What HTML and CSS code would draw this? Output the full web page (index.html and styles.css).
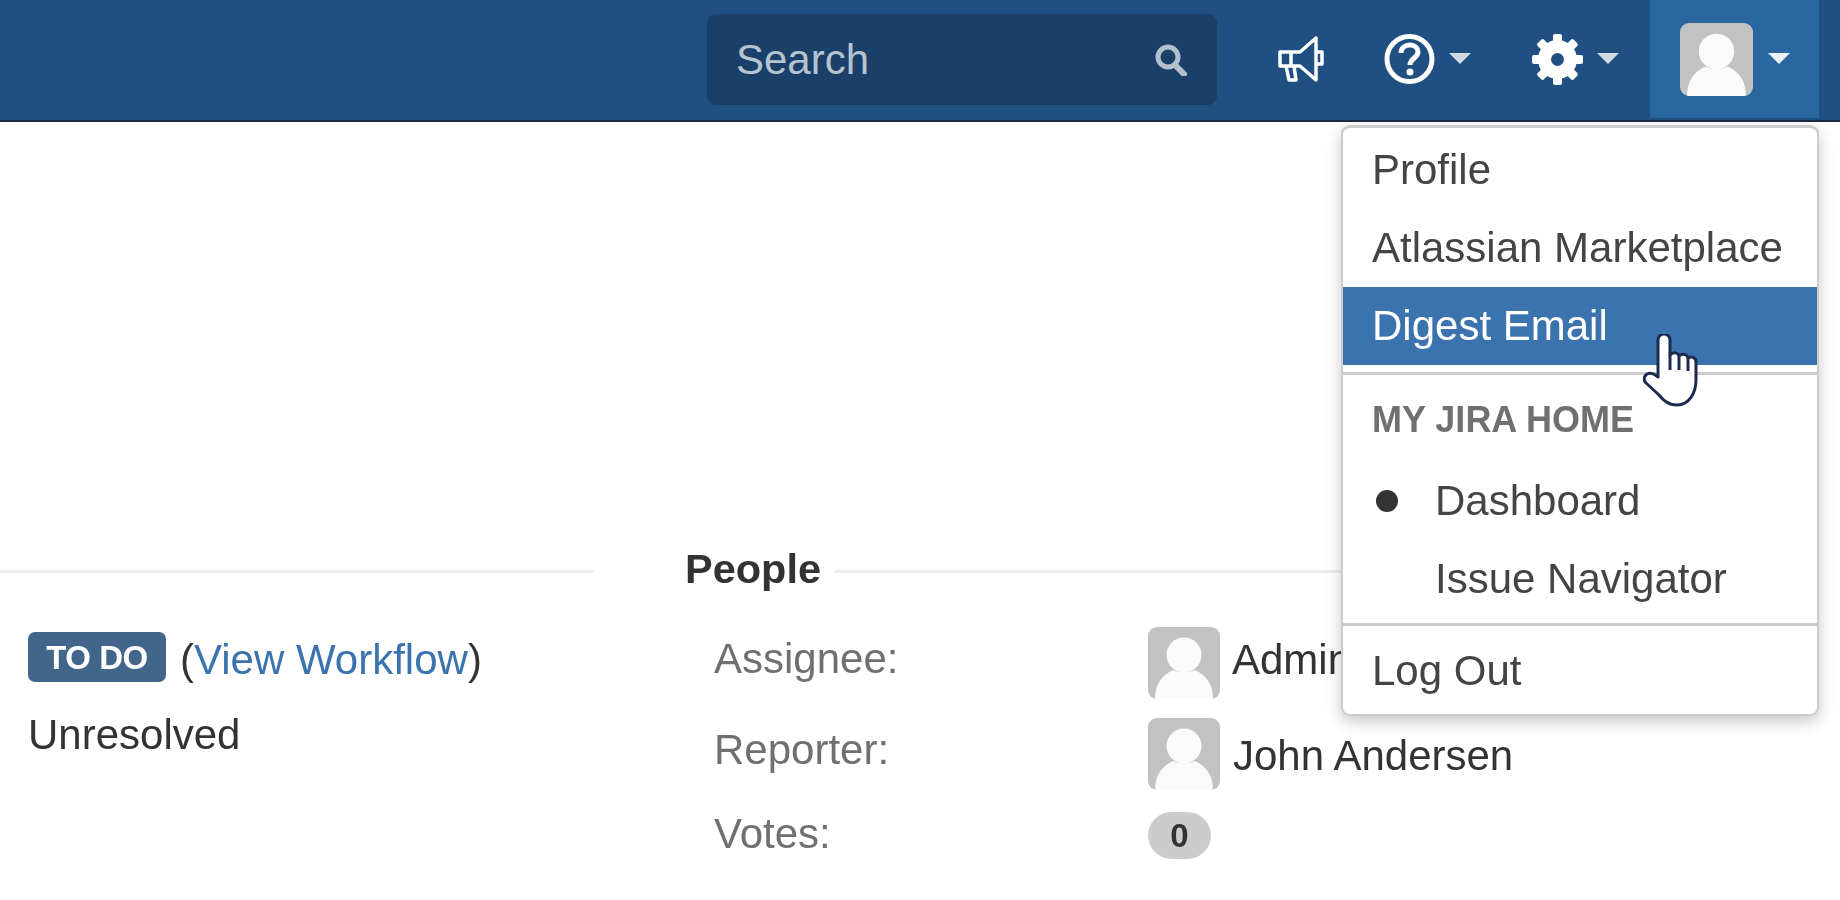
FILE: index.html
```html
<!DOCTYPE html>
<html lang="en">

<head>
    <meta charset="UTF-8" />
    <title>Issue - Profile menu</title>
    <link rel="stylesheet" href="styles.css">
</head>

<body>

    <svg class="defs" width="0" height="0">
        <symbol id="avatar" viewBox="0 0 72 72">
            <rect width="72" height="72" fill="#c2c2c2" />
            <circle cx="36" cy="28" r="17.5" fill="#fafafa" />
            <path d="M7 72c0-13 5-23 18-29 7 3 15 3 22 0 13 6 18 16 18 29z" fill="#fafafa" />
        </symbol>
    </svg>

    <header class="topbar">
        <div class="search">
            <span class="search-text">Search</span>
            <svg class="search-icon" width="34" height="32" viewBox="0 0 34 32">
                <circle cx="14" cy="13" r="10" fill="none" stroke="#b3bfcc" stroke-width="5" />
                <path d="M21 21l9 9" stroke="#b3bfcc" stroke-width="6" stroke-linecap="round" />
            </svg>
        </div>

        <a class="nav-item">
            <svg width="47" height="46" viewBox="0 0 47 46">
                <path d="M3 16H23L39 2V44L23 30H3Z M14 16V30 M9 30L12 44H19L17 30 M39 16H45V28H39" fill="none"
                    stroke="#fff" stroke-width="3.5" stroke-linejoin="round" />
            </svg>
        </a>
        <a class="nav-item nav-item-help">
            <svg width="51" height="50" viewBox="0 0 51 50">
                <circle cx="25.5" cy="25" r="22.5" fill="none" stroke="#fff" stroke-width="5" />
                <path d="M17 19c0-5 4-8 9-8s8 3 8 7c0 6-8 6-8 13" fill="none" stroke="#fff" stroke-width="5" />
                <circle cx="26" cy="38" r="3.5" fill="#fff" />
            </svg>
            <span class="caret"></span>
        </a>
        <a class="nav-item nav-item-admin">
            <svg width="51" height="51" viewBox="0 0 51 51">
                <g fill="#fff">
                    <rect x="21" y="0" width="9" height="51" rx="2" />
                    <rect x="21" y="0" width="9" height="51" rx="2" transform="rotate(45 25.5 25.5)" />
                    <rect x="21" y="0" width="9" height="51" rx="2" transform="rotate(90 25.5 25.5)" />
                    <rect x="21" y="0" width="9" height="51" rx="2" transform="rotate(135 25.5 25.5)" />
                </g>
                <circle cx="25.5" cy="25.5" r="13" fill="none" stroke="#fff" stroke-width="13" />
                <circle cx="25.5" cy="25.5" r="6.5" fill="#205081" />
            </svg>
            <span class="caret"></span>
        </a>
        <a class="nav-item nav-item-active">
            <svg class="avatar" width="73" height="73"><use href="#avatar" /></svg>
            <span class="caret caret-light"></span>
        </a>
    </header>

    <main class="issue">
        <section class="details">
            <div class="module-head"><span class="module-line"></span></div>
            <div class="status-row">
                <span class="lozenge">TO DO</span>
                <span class="status-note">(<a class="link">View Workflow</a>)</span>
            </div>
            <div class="resolution">Unresolved</div>
        </section>

        <section class="people">
            <div class="module-head">
                <h2 class="module-title">People</h2>
                <span class="module-line"></span>
            </div>
            <div class="people-grid">
                <div class="people-label">Assignee:</div>
                <div class="people-value">
                    <svg class="avatar" width="72" height="72"><use href="#avatar" /></svg>
                    <span class="name-up">Admin</span>
                </div>
                <div class="people-label">Reporter:</div>
                <div class="people-value">
                    <svg class="avatar" width="72" height="72"><use href="#avatar" /></svg>
                    <span class="name-down">John Andersen</span>
                </div>
                <div class="people-label people-label-short">Votes:</div>
                <div class="people-value"><span class="badge">0</span></div>
            </div>
        </section>
    </main>

    <!-- dropdown open over the page -->
    <nav class="menu">
        <div class="menu-group menu-group-first">
            <a class="menu-item">Profile</a>
            <a class="menu-item">Atlassian Marketplace</a>
            <a class="menu-item menu-item-hover">Digest Email</a>
        </div>
        <div class="menu-group menu-group-home">
            <div class="menu-heading">MY JIRA HOME</div>
            <a class="menu-item menu-item-check menu-item-checked">Dashboard</a>
            <a class="menu-item menu-item-check">Issue Navigator</a>
        </div>
        <div class="menu-group menu-group-last">
            <a class="menu-item">Log Out</a>
        </div>
    </nav>

    <svg class="hand" width="56" height="74" viewBox="0 0 56 74">
        <path d="M15 6a6 6 0 0 1 12 0v15c3-3 8-3 9 1 3-3 8-2 9 2 3-2 8-1 8 4v18c0 13-7 25-19 25-9 0-14-5-19-11L3 49c-3-3-2-7 1-9 4-2 7 0 11 3z"
            fill="#fff" stroke="#1d2a4d" stroke-width="3" stroke-linejoin="round" />
        <path d="M27 21v15M36 22v14M45 24v13" fill="none" stroke="#1d2a4d" stroke-width="3" />
    </svg>

</body>

</html>
```

FILE: styles.css
```css
* {
    box-sizing: border-box;
}

html,
body {
    height: 100%;
}

body {
    margin: 0;
    overflow: hidden;
    background-color: #fff;
    color: #333;
    font-family: "Liberation Sans", Arial, sans-serif;
    font-size: 42px;
    /* the source is an enlarged, soft capture */
    filter: blur(0.7px);
}

.defs {
    display: block;
}

.avatar {
    display: block;
    flex: none;
    border-radius: 9px;
}

/* top bar */
.topbar {
    display: flex;
    justify-content: flex-end;
    height: 122px;
    padding-right: 21px;
    background-color: #205081;
    border-bottom: 2px solid #1c2b45;
}

.search {
    display: flex;
    align-items: center;
    justify-content: space-between;
    width: 510px;
    height: 91px;
    margin: 14px 30px 0 0;
    padding: 0 29px;
    border-radius: 9px;
    background-color: #1a3f68;
    color: #b6c3d1;
}

.nav-item {
    display: flex;
    align-items: center;
    gap: 13px;
    height: 118px;
    padding: 0 30px;
}

.nav-item-help,
.nav-item-admin {
    gap: 14px;
    padding-right: 31px;
}

.nav-item-active {
    background-color: #2a67a1;
    gap: 15px;
    padding-right: 29px;
}

.caret {
    width: 0;
    height: 0;
    margin-top: -2px;
    border-left: 11.5px solid transparent;
    border-right: 11.5px solid transparent;
    border-top: 11.5px solid #d2dae4;
}

.caret-light {
    border-top-color: #eef2f6;
}

/* issue body */
.issue {
    display: flex;
    padding-top: 424px;
}

.details {
    width: 594px;
}

.people {
    width: 1015px;
    margin-left: 91px;
}

.module-head {
    display: flex;
    align-items: center;
    height: 50px;
}

.module-title {
    margin: 0 14px 4px 0;
    font-size: 41.5px;
    font-weight: bold;
}

.module-line {
    flex: 1;
    height: 3px;
    background-color: #ececec;
}

.status-row {
    display: flex;
    align-items: center;
    gap: 14px;
    height: 50px;
    margin-top: 36px;
}

.status-note {
    margin-top: 5px;
}

.lozenge {
    display: flex;
    align-items: center;
    justify-content: center;
    width: 138px;
    height: 50px;
    padding-top: 2px;
    border-radius: 7px;
    background-color: #42658a;
    color: #fff;
    font-size: 33px;
    font-weight: bold;
    letter-spacing: -0.5px;
}

.link {
    color: #3b73af;
}

.status-row,
.resolution {
    padding-left: 28px;
}

.resolution {
    margin-top: 21px;
    line-height: 63px;
}

.people-grid {
    display: grid;
    grid-template-columns: 434px 1fr;
    grid-template-rows: 72px 72px 50px;
    row-gap: 19px;
    margin-top: 31px;
    padding-left: 29px;
}

.people-label {
    color: #707070;
    line-height: 63px;
}

.people-label-short {
    line-height: 50px;
}

.people-value {
    display: flex;
    align-items: center;
    gap: 12px;
}

.name-up {
    margin-bottom: 6px;
}

.name-down {
    margin: 4px 0 0 1px;
}

.badge {
    align-self: flex-end;
    width: 63px;
    height: 47px;
    border-radius: 24px;
    background-color: #ccc;
    font-size: 33px;
    font-weight: bold;
    line-height: 47px;
    text-align: center;
}

/* profile dropdown */
.menu {
    position: absolute;
    top: 125px;
    left: 1341px;
    width: 478px;
    height: 591px;
    border: 2px solid #ccc;
    border-top-width: 3px;
    border-radius: 9px;
    background-color: #fff;
    color: #444;
    box-shadow: 0 6px 16px rgba(0, 0, 0, 0.22);
}

.menu-group-first {
    padding: 3px 0 7px;
}

.menu-group-home {
    padding-bottom: 5px;
    border-top: 3px solid #ccc;
}

.menu-group-last {
    padding-top: 6px;
    border-top: 3px solid #ccc;
}

.menu-item {
    position: relative;
    display: block;
    height: 78px;
    padding-left: 29px;
    line-height: 78px;
    white-space: nowrap;
}

.menu-item-hover {
    background-color: #3b73af;
    color: #fff;
}

.menu-item-check {
    padding-left: 92px;
}

.menu-item-checked::before {
    content: "";
    position: absolute;
    top: 28px;
    left: 33px;
    width: 22px;
    height: 22px;
    border-radius: 50%;
    background-color: #333;
}

.menu-heading {
    height: 87px;
    padding-left: 29px;
    color: #707070;
    font-size: 36px;
    font-weight: bold;
    line-height: 90px;
}

.hand {
    position: absolute;
    top: 334px;
    left: 1643px;
}
```
